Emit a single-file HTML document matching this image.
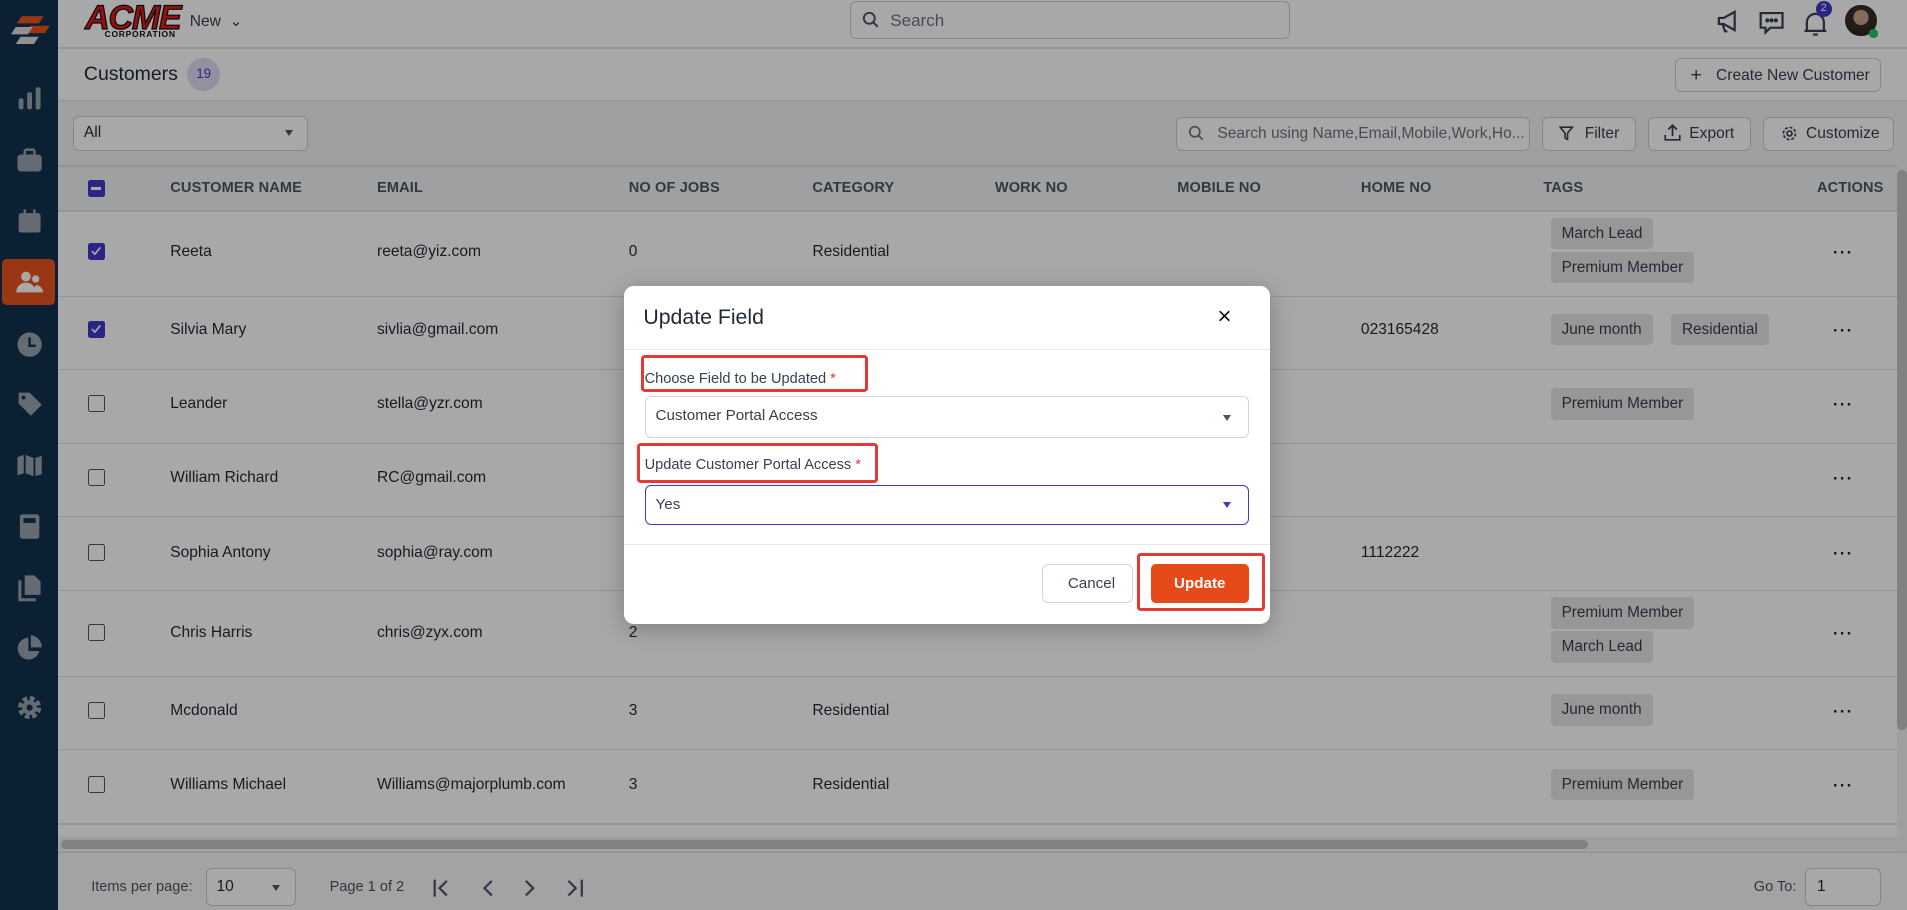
<!DOCTYPE html>
<html><head><meta charset="utf-8"><style>
html,body{margin:0;padding:0;overflow:hidden;background:#fff}
#w{zoom:1.21620;width:1568px;height:748px;position:relative;overflow:hidden;font-family:"Liberation Sans",sans-serif;color:#1f2937;background:#fff}
.a{position:absolute}
.t{position:absolute;font-size:12.8px;white-space:nowrap}
.bx{position:absolute;border:1px solid #c9ced6;border-radius:5px;background:#fff;box-sizing:border-box}
.hd{position:absolute;top:148px;font-size:12px;color:#4b5563;font-weight:bold;letter-spacing:.1px}
.hl{position:absolute;left:48px;right:8px;height:1px;background:#dfe3e8}
.cb{position:absolute;left:72px;width:14px;height:14px;border:1.6px solid #4b5563;border-radius:2px;box-sizing:border-box}
.cbx{background:#4338ca;border-color:#4338ca}
.chip{position:absolute;background:#e6e6e6;border-radius:3px;height:26px;line-height:26px;padding:0 9px;font-size:12.6px;color:#374151}
.dots{position:absolute;left:1507px;font-size:14px;font-weight:bold;letter-spacing:1px}
.rb{position:absolute;border:3px solid #e53935;border-radius:3px;box-sizing:border-box}
.sb svg{position:absolute;left:12px}
</style></head><body><div id="w">
<!-- sidebar -->
<div class="a sb" style="left:0;top:0;width:48px;height:748px;background:#12314c">
<svg style="top:8px;left:5px" width="38" height="36" viewBox="0 0 38 36"><polygon points="13,5 31,5 27,11 9,11" fill="#e8521e"/><polygon points="20,13 36,13 32,19 16,19" fill="#e8521e"/><polygon points="8,14 22,14 18,20 4,20" fill="#ddd"/><polygon points="12,22 27,22 23,28 8,28" fill="#ddd"/></svg>
<svg style="top:70px" width="24" height="22" viewBox="0 0 24 22"><rect x="3" y="11" width="4" height="9" rx="1.5" fill="#9aa3ad"/><rect x="10" y="6" width="4" height="14" rx="1.5" fill="#9aa3ad"/><rect x="17" y="2" width="4" height="18" rx="1.5" fill="#9aa3ad"/></svg>
<svg style="top:120px" width="24" height="24" viewBox="0 0 24 24"><rect x="2" y="7" width="20" height="14" rx="3" fill="#9aa3ad"/><rect x="8" y="3" width="8" height="5" rx="1.5" fill="none" stroke="#9aa3ad" stroke-width="2"/></svg>
<svg style="top:170px" width="24" height="24" viewBox="0 0 24 24"><rect x="3" y="5" width="18" height="16" rx="2" fill="#9aa3ad"/><rect x="7" y="2" width="2" height="5" fill="#9aa3ad"/><rect x="15" y="2" width="2" height="5" fill="#9aa3ad"/></svg>
<div class="a" style="left:2px;top:213px;width:43px;height:38px;background:#e8521e;border-radius:4px"></div>
<svg style="top:220px" width="24" height="24" viewBox="0 0 24 24"><circle cx="9" cy="7" r="4" fill="#fff"/><path d="M1 20c0-5 4-8 8-8s8 3 8 8z" fill="#fff"/><circle cx="17" cy="9" r="3" fill="#fff"/><path d="M15 20c0-3 1-5 3-6 3 1 5 3 5 6z" fill="#fff"/></svg>
<svg style="top:271px" width="24" height="24" viewBox="0 0 24 24"><circle cx="12" cy="12" r="10" fill="#9aa3ad"/><path d="M12 6v7h5" stroke="#12314c" stroke-width="2" fill="none"/></svg>
<svg style="top:320px" width="24" height="24" viewBox="0 0 24 24"><path d="M3 3h9l10 10-9 9L3 12z" fill="#9aa3ad"/><circle cx="7" cy="7" r="1.6" fill="#12314c"/></svg>
<svg style="top:371px" width="24" height="24" viewBox="0 0 24 24"><path d="M2 5l6-2 8 3 6-2v15l-6 2-8-3-6 2z" fill="#9aa3ad"/><path d="M8 3v15M16 6v15" stroke="#12314c" stroke-width="1.5"/></svg>
<svg style="top:421px" width="24" height="24" viewBox="0 0 24 24"><rect x="4" y="2" width="16" height="20" rx="2" fill="#9aa3ad"/><rect x="7" y="5" width="10" height="4" fill="#12314c"/></svg>
<svg style="top:471px" width="24" height="24" viewBox="0 0 24 24"><path d="M8 2h8l5 5v11H8z" fill="#9aa3ad"/><path d="M4 6v16h13" stroke="#9aa3ad" stroke-width="2.5" fill="none"/></svg>
<svg style="top:521px" width="24" height="24" viewBox="0 0 24 24"><path d="M11 3a9 9 0 1 0 9 11h-9z" fill="#9aa3ad"/><path d="M13 1v10h9A10 10 0 0 0 13 1z" fill="#9aa3ad"/></svg>
<svg style="top:570px" width="24" height="24" viewBox="0 0 24 24"><circle cx="12" cy="12" r="7" fill="none" stroke="#9aa3ad" stroke-width="5" stroke-dasharray="3.5 2"/><circle cx="12" cy="12" r="6" fill="#9aa3ad"/><circle cx="12" cy="12" r="2.5" fill="#12314c"/></svg>
</div>
<!-- topbar -->
<div class="a" style="left:70px;top:-1px;font:italic 900 28px 'Liberation Sans',sans-serif;color:#e01b1b;letter-spacing:-1px;-webkit-text-stroke:1px #111">ACME</div>
<div class="t" style="left:86px;top:24px;font-size:7px;font-weight:bold;letter-spacing:.6px;color:#111">CORPORATION</div>
<div class="t" style="left:156px;top:10px;color:#374151">New &nbsp;⌄</div>
<div class="bx" style="left:699px;top:1px;width:362px;height:31px"></div>
<svg class="a" style="left:709px;top:9px" width="14" height="14" viewBox="0 0 14 14"><circle cx="6" cy="6" r="4.5" stroke="#4b5563" stroke-width="1.6" fill="none"/><path d="M9.5 9.5L13 13" stroke="#4b5563" stroke-width="1.6"/></svg>
<div class="t" style="left:732px;top:9px;font-size:14px;color:#6b7280">Search</div>
<svg class="a" style="left:1409px;top:6px" width="24" height="24" viewBox="0 0 24 24" fill="none" stroke="#374151" stroke-width="1.8"><path d="M4 9h4l9-5v15l-9-5H4z"/><path d="M7 14l2 6h2"/></svg>
<svg class="a" style="left:1445px;top:6px" width="24" height="24" viewBox="0 0 24 24" fill="none" stroke="#374151" stroke-width="1.8"><path d="M3 5h18v12h-10l-4 4v-4H3z"/><circle cx="8.5" cy="11" r=".8" fill="#374151"/><circle cx="12" cy="11" r=".8" fill="#374151"/><circle cx="15.5" cy="11" r=".8" fill="#374151"/></svg>
<svg class="a" style="left:1482px;top:7px" width="22" height="24" viewBox="0 0 22 24" fill="none" stroke="#374151" stroke-width="1.8"><path d="M4 18V11a7 7 0 0 1 14 0v7zM2 18h18M9 21h4"/></svg>
<div class="a" style="left:1493px;top:1px;width:13px;height:13px;border-radius:50%;background:#4338ca;color:#fff;font-size:9px;text-align:center;line-height:13px">2</div>
<div class="a" style="left:1517px;top:4px;width:26px;height:26px;border-radius:50%;background:radial-gradient(circle at 50% 40%,#c9a48a 0 30%,#3a2e28 32%,#222 100%)"></div>
<div class="a" style="left:1537px;top:24px;width:7px;height:7px;border-radius:50%;background:#22c55e"></div>
<div class="hl" style="top:39px;left:48px;right:0"></div>
<!-- customers header -->
<div class="t" style="left:69px;top:52px;font-size:16px;color:#1f2937">Customers</div>
<div class="a" style="left:154px;top:48px;width:27px;height:27px;border-radius:50%;background:#e0dcf5;color:#4338ca;font-size:11px;text-align:center;line-height:27px">19</div>
<div class="bx" style="left:1377px;top:48px;width:170px;height:28px"></div>
<div class="t" style="left:1390px;top:53px;font-size:16px;color:#374151">+</div>
<div class="t" style="left:1411px;top:55px;color:#374151">Create New Customer</div>
<div class="hl" style="top:82px;left:48px;right:0"></div>
<!-- toolbar -->
<div class="a" style="left:48px;top:83px;width:1520px;height:90px;background:#f2f3f6"></div>
<div class="bx" style="left:60px;top:95px;width:193px;height:29px"></div>
<div class="t" style="left:69px;top:102px;color:#1f2937">All</div>
<div class="a" style="left:234px;top:107px;border:4px solid transparent;border-top:5px solid #4b5563"></div>
<div class="bx" style="left:967px;top:96px;width:291px;height:28px"></div>
<svg class="a" style="left:977px;top:103px" width="13" height="13" viewBox="0 0 14 14"><circle cx="6" cy="6" r="4.5" stroke="#6b7280" stroke-width="1.5" fill="none"/><path d="M9.5 9.5L13 13" stroke="#6b7280" stroke-width="1.5"/></svg>
<div class="t" style="left:1001px;top:103px;color:#6b7280">Search using Name,Email,Mobile,Work,Ho...</div>
<div class="bx" style="left:1268px;top:96px;width:77px;height:28px"></div>
<svg class="a" style="left:1282px;top:104px" width="12" height="12" viewBox="0 0 12 12"><path d="M1 1h10L7 6v5L5 10V6z" fill="none" stroke="#374151" stroke-width="1.3"/></svg>
<div class="t" style="left:1303px;top:103px;color:#374151">Filter</div>
<div class="bx" style="left:1355px;top:96px;width:85px;height:28px"></div>
<svg class="a" style="left:1368px;top:102px" width="14" height="14" viewBox="0 0 14 14" fill="none" stroke="#374151" stroke-width="1.4"><path d="M7 10V1M3.5 4.5L7 1l3.5 3.5M1 9v4h12V9"/></svg>
<div class="t" style="left:1389px;top:103px;color:#374151">Export</div>
<div class="bx" style="left:1450px;top:96px;width:107px;height:28px"></div>
<svg class="a" style="left:1464px;top:103px" width="14" height="14" viewBox="0 0 14 14" fill="none" stroke="#374151" stroke-width="1.4"><circle cx="7" cy="7" r="2"/><circle cx="7" cy="7" r="5" stroke-dasharray="2.4 1.5"/></svg>
<div class="t" style="left:1485px;top:103px;color:#374151">Customize</div>
<div class="hl" style="top:136px"></div>
<!-- table header -->
<div class="a" style="left:72px;top:148px;width:14px;height:14px;background:#4338ca;border-radius:2px"><div class="a" style="left:3px;top:6px;width:8px;height:2px;background:#fff"></div></div>
<div class="hd" style="left:140px">CUSTOMER NAME</div>
<div class="hd" style="left:310px">EMAIL</div>
<div class="hd" style="left:517px">NO OF JOBS</div>
<div class="hd" style="left:668px">CATEGORY</div>
<div class="hd" style="left:818px">WORK NO</div>
<div class="hd" style="left:968px">MOBILE NO</div>
<div class="hd" style="left:1119px">HOME NO</div>
<div class="hd" style="left:1269px">TAGS</div>
<div class="hd" style="left:1494px">ACTIONS</div>
<div class="hl" style="top:173px"></div>
<!-- rows -->
<div class="cb cbx" style="top:200px"><svg style="position:absolute;left:1px;top:1px" width="10" height="10" viewBox="0 0 10 10"><path d="M1.5 5l2.5 2.5L8.5 2" stroke="#fff" stroke-width="1.4" fill="none"/></svg></div>
<div class="t" style="left:140px;top:200px">Reeta</div><div class="t" style="left:310px;top:200px">reeta@yiz.com</div><div class="t" style="left:517px;top:200px">0</div><div class="t" style="left:668px;top:200px">Residential</div>
<div class="chip" style="left:1275px;top:179px">March Lead</div><div class="chip" style="left:1275px;top:207px">Premium Member</div><div class="dots" style="top:200px">···</div>
<div class="hl" style="top:243px"></div>
<div class="cb cbx" style="top:264px"><svg style="position:absolute;left:1px;top:1px" width="10" height="10" viewBox="0 0 10 10"><path d="M1.5 5l2.5 2.5L8.5 2" stroke="#fff" stroke-width="1.4" fill="none"/></svg></div>
<div class="t" style="left:140px;top:264px">Silvia Mary</div><div class="t" style="left:310px;top:264px">sivlia@gmail.com</div><div class="t" style="left:1119px;top:264px">023165428</div>
<div class="chip" style="left:1275px;top:258px">June month</div><div class="chip" style="left:1374px;top:258px">Residential</div><div class="dots" style="top:264px">···</div>
<div class="hl" style="top:303px"></div>
<div class="cb" style="top:325px"></div>
<div class="t" style="left:140px;top:325px">Leander</div><div class="t" style="left:310px;top:325px">stella@yzr.com</div>
<div class="chip" style="left:1275px;top:319px">Premium Member</div><div class="dots" style="top:325px">···</div>
<div class="hl" style="top:364px"></div>
<div class="cb" style="top:386px"></div>
<div class="t" style="left:140px;top:386px">William Richard</div><div class="t" style="left:310px;top:386px">RC@gmail.com</div><div class="dots" style="top:386px">···</div>
<div class="hl" style="top:424px"></div>
<div class="cb" style="top:447px"></div>
<div class="t" style="left:140px;top:447px">Sophia Antony</div><div class="t" style="left:310px;top:447px">sophia@ray.com</div><div class="t" style="left:1119px;top:447px">1112222</div><div class="dots" style="top:447px">···</div>
<div class="hl" style="top:485px"></div>
<div class="cb" style="top:513px"></div>
<div class="t" style="left:140px;top:513px">Chris Harris</div><div class="t" style="left:310px;top:513px">chris@zyx.com</div><div class="t" style="left:517px;top:513px">2</div>
<div class="chip" style="left:1275px;top:491px">Premium Member</div><div class="chip" style="left:1275px;top:519px">March Lead</div><div class="dots" style="top:513px">···</div>
<div class="hl" style="top:556px"></div>
<div class="cb" style="top:577px"></div>
<div class="t" style="left:140px;top:577px">Mcdonald</div><div class="t" style="left:517px;top:577px">3</div><div class="t" style="left:668px;top:577px">Residential</div>
<div class="chip" style="left:1275px;top:571px">June month</div><div class="dots" style="top:577px">···</div>
<div class="hl" style="top:616px"></div>
<div class="cb" style="top:638px"></div>
<div class="t" style="left:140px;top:638px">Williams Michael</div><div class="t" style="left:310px;top:638px">Williams@majorplumb.com</div><div class="t" style="left:517px;top:638px">3</div><div class="t" style="left:668px;top:638px">Residential</div>
<div class="chip" style="left:1275px;top:632px">Premium Member</div><div class="dots" style="top:638px">···</div>
<div class="hl" style="top:677px"></div>
<!-- scrollbars -->
<div class="a" style="left:48px;top:688px;width:1512px;height:11px;background:#f1f1f1"></div>
<div class="a" style="left:50px;top:691px;width:1256px;height:7px;border-radius:4px;background:#c4c4c8"></div>
<div class="a" style="left:1560px;top:137px;width:8px;height:563px;background:#f1f1f1"></div>
<div class="a" style="left:1560px;top:140px;width:8px;height:460px;border-radius:4px;background:#c4c4c8"></div>
<div class="hl" style="top:700px;right:0"></div>
<!-- footer -->
<div class="a" style="left:48px;top:701px;width:1520px;height:47px;background:#f7f7f8"></div>
<div class="t" style="left:75px;top:723px;font-size:12px;color:#4b5563">Items per page:</div>
<div class="bx" style="left:169px;top:714px;width:74px;height:31px"></div>
<div class="t" style="left:178px;top:722px;color:#1f2937">10</div>
<div class="a" style="left:224px;top:728px;border:4px solid transparent;border-top:5px solid #4b5563"></div>
<div class="t" style="left:271px;top:723px;font-size:12px;color:#4b5563">Page 1 of 2</div>
<svg class="a" style="left:354px;top:720px" width="135" height="20" viewBox="0 0 135 20" fill="none" stroke="#4b5563" stroke-width="1.8"><path d="M3 3v14M13 4l-6 6 6 6"/><path d="M50 4l-6 6 6 6"/><path d="M78 4l6 6-6 6"/><path d="M113 4l6 6-6 6M124 3v14"/></svg>
<div class="t" style="left:1442px;top:723px;font-size:12px;color:#4b5563">Go To:</div>
<div class="bx" style="left:1484px;top:714px;width:63px;height:31px"></div>
<div class="t" style="left:1494px;top:722px;color:#1f2937">1</div>
<!-- overlay -->
<div class="a" style="left:0;top:0;width:1568px;height:748px;background:rgba(0,0,0,.34)"></div>
<!-- modal -->
<div class="a" style="left:513px;top:235px;width:531px;height:278px;background:#fff;border-radius:8px;box-shadow:0 4px 20px rgba(0,0,0,.25)">
<div class="t" style="left:16px;top:16px;font-size:17.5px;color:#1f2937">Update Field</div>
<div class="t" style="left:488px;top:14px;font-size:20px;color:#111">×</div>
<div class="a" style="left:0;top:52px;width:531px;height:1px;background:#e5e7eb"></div>
<div class="t" style="left:17px;top:70px;font-size:12px;color:#374151">Choose Field to be Updated <span style="color:#e53935">*</span></div>
<div class="bx" style="left:17px;top:91px;width:497px;height:34px;border-color:#d1d5db"></div>
<div class="t" style="left:26px;top:100px;font-size:12.5px;color:#374151">Customer Portal Access</div>
<div class="a" style="left:493px;top:106px;border:4px solid transparent;border-top:5px solid #4b5563"></div>
<div class="t" style="left:17px;top:141px;font-size:12px;color:#374151">Update Customer Portal Access <span style="color:#e53935">*</span></div>
<div class="bx" style="left:17px;top:164px;width:497px;height:33px;border-color:#4338ca"></div>
<div class="t" style="left:26px;top:173px;font-size:12.5px;color:#374151">Yes</div>
<div class="a" style="left:493px;top:178px;border:4px solid transparent;border-top:5px solid #4338ca"></div>
<div class="a" style="left:0;top:212px;width:531px;height:1px;background:#e5e7eb"></div>
<div class="bx" style="left:344px;top:229px;width:75px;height:32px;border-color:#d1d5db"></div>
<div class="t" style="left:365px;top:238px;font-size:12.5px;color:#374151">Cancel</div>
<div class="a" style="left:433px;top:229px;width:81px;height:32px;background:#e64a19;border-radius:4px;color:#fff;font-size:12.5px;font-weight:bold;text-align:center;line-height:33px">Update</div>
</div>
<div class="rb" style="left:527px;top:292px;width:187px;height:30px"></div>
<div class="rb" style="left:524px;top:364px;width:198px;height:33px"></div>
<div class="rb" style="left:935px;top:455px;width:105px;height:47px"></div>
</div></body></html>
